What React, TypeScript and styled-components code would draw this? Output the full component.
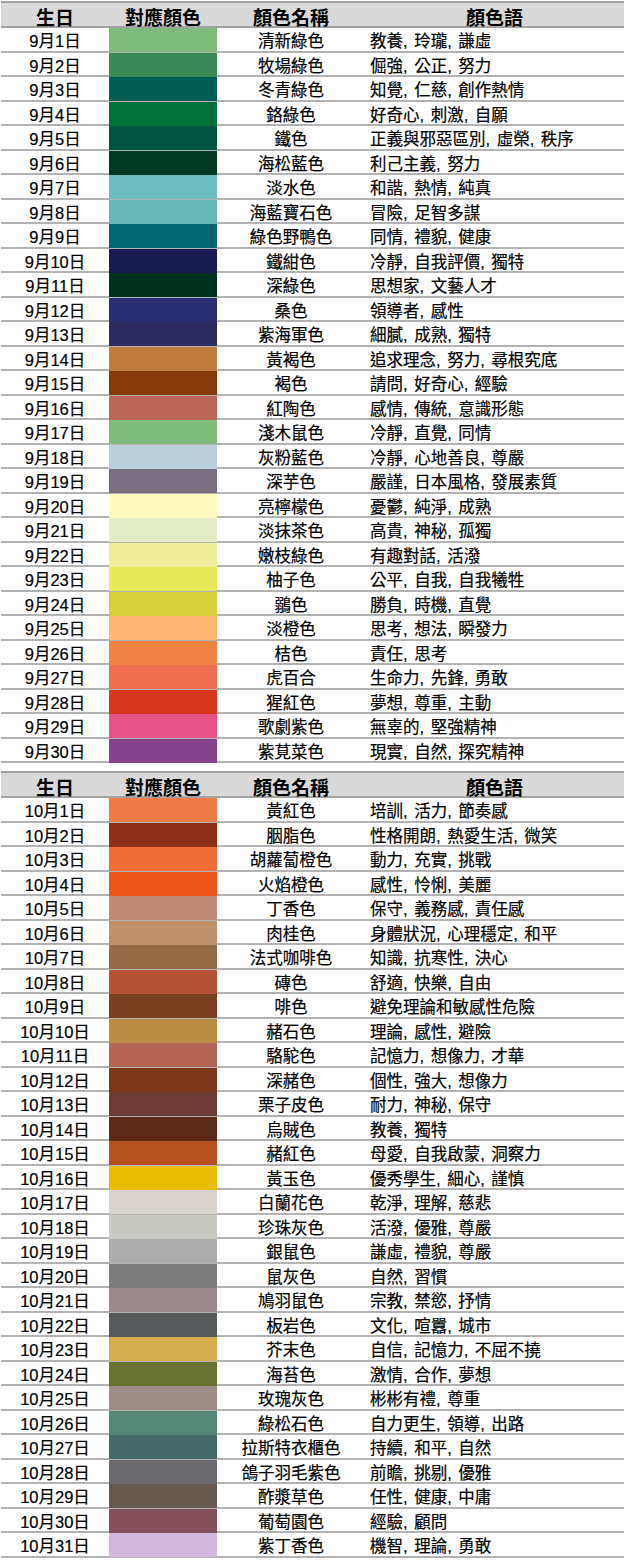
import styled, { createGlobalStyle } from "styled-components";

const GlobalStyle = createGlobalStyle`
  body {
    margin: 0;
    background: #fff;
    font-family: "Liberation Sans", "Noto Sans CJK TC", sans-serif;
    color: #000;
  }
`;

type Entry = [string, string, string, string];

const september: Entry[] = [
  ["9月1日", "#7fbb7c", "清新綠色", "教養, 玲瓏, 謙虛"],
  ["9月2日", "#3a8a58", "牧場綠色", "倔強, 公正, 努力"],
  ["9月3日", "#005f55", "冬青綠色", "知覺, 仁慈, 創作熱情"],
  ["9月4日", "#00713a", "鉻綠色", "好奇心, 刺激, 自願"],
  ["9月5日", "#005440", "鐵色", "正義與邪惡區別, 虛榮, 秩序"],
  ["9月6日", "#013a22", "海松藍色", "利己主義, 努力"],
  ["9月7日", "#6cbcc0", "淡水色", "和諧, 熱情, 純真"],
  ["9月8日", "#68b6b6", "海藍寶石色", "冒險, 足智多謀"],
  ["9月9日", "#006670", "綠色野鴨色", "同情, 禮貌, 健康"],
  ["9月10日", "#1a1a52", "鐵紺色", "冷靜, 自我評價, 獨特"],
  ["9月11日", "#00331f", "深綠色", "思想家, 文藝人才"],
  ["9月12日", "#2a2d72", "桑色", "領導者, 感性"],
  ["9月13日", "#2d2a60", "紫海軍色", "細膩, 成熟, 獨特"],
  ["9月14日", "#c07b40", "黃褐色", "追求理念, 努力, 尋根究底"],
  ["9月15日", "#873a0a", "褐色", "請問, 好奇心, 經驗"],
  ["9月16日", "#bb6656", "紅陶色", "感情, 傳統, 意識形態"],
  ["9月17日", "#7fbb7c", "淺木鼠色", "冷靜, 直覺, 同情"],
  ["9月18日", "#bccfdd", "灰粉藍色", "冷靜, 心地善良, 尊嚴"],
  ["9月19日", "#787080", "深芋色", "嚴謹, 日本風格, 發展素質"],
  ["9月20日", "#fffbbf", "亮檸檬色", "憂鬱, 純淨, 成熟"],
  ["9月21日", "#e3ebc7", "淡抹茶色", "高貴, 神秘, 孤獨"],
  ["9月22日", "#eeed9c", "嫩枝綠色", "有趣對話, 活潑"],
  ["9月23日", "#e9e85a", "柚子色", "公平, 自我, 自我犧牲"],
  ["9月24日", "#d8d03b", "鶸色", "勝負, 時機, 直覺"],
  ["9月25日", "#fdb66e", "淡橙色", "思考, 想法, 瞬發力"],
  ["9月26日", "#f08244", "桔色", "責任, 思考"],
  ["9月27日", "#ef6e50", "虎百合", "生命力, 先鋒, 勇敢"],
  ["9月28日", "#d5381d", "猩紅色", "夢想, 尊重, 主動"],
  ["9月29日", "#e65388", "歌劇紫色", "無辜的, 堅強精神"],
  ["9月30日", "#87428c", "紫莧菜色", "現實, 自然, 探究精神"],
];

const october: Entry[] = [
  ["10月1日", "#ee7b48", "黃紅色", "培訓, 活力, 節奏感"],
  ["10月2日", "#8e2e17", "胭脂色", "性格開朗, 熱愛生活, 微笑"],
  ["10月3日", "#ef6e38", "胡蘿蔔橙色", "動力, 充實, 挑戰"],
  ["10月4日", "#eb561b", "火焰橙色", "感性, 怜悧, 美麗"],
  ["10月5日", "#c48a78", "丁香色", "保守, 義務感, 責任感"],
  ["10月6日", "#c0906b", "肉桂色", "身體狀況, 心理穩定, 和平"],
  ["10月7日", "#936b47", "法式咖啡色", "知識, 抗寒性, 決心"],
  ["10月8日", "#b45236", "磚色", "舒適, 快樂, 自由"],
  ["10月9日", "#7a401f", "啡色", "避免理論和敏感性危險"],
  ["10月10日", "#bb8a43", "赭石色", "理論, 感性, 避險"],
  ["10月11日", "#b56553", "駱駝色", "記憶力, 想像力, 才華"],
  ["10月12日", "#7e3618", "深赭色", "個性, 強大, 想像力"],
  ["10月13日", "#6c3b33", "栗子皮色", "耐力, 神秘, 保守"],
  ["10月14日", "#5d2a18", "烏賊色", "教養, 獨特"],
  ["10月15日", "#b5521f", "赭紅色", "母愛, 自我啟蒙, 洞察力"],
  ["10月16日", "#ebbd00", "黃玉色", "優秀學生, 細心, 謹慎"],
  ["10月17日", "#d8d4cd", "白蘭花色", "乾淨, 理解, 慈悲"],
  ["10月18日", "#c8c8c3", "珍珠灰色", "活潑, 優雅, 尊嚴"],
  ["10月19日", "#adadad", "銀鼠色", "謙虛, 禮貌, 尊嚴"],
  ["10月20日", "#7d7d7d", "鼠灰色", "自然, 習慣"],
  ["10月21日", "#9b8a8d", "鳩羽鼠色", "宗教, 禁慾, 抒情"],
  ["10月22日", "#575a5a", "板岩色", "文化, 喧囂, 城市"],
  ["10月23日", "#d6ad4e", "芥末色", "自信, 記憶力, 不屈不撓"],
  ["10月24日", "#66722e", "海苔色", "激情, 合作, 夢想"],
  ["10月25日", "#9c8c85", "玫瑰灰色", "彬彬有禮, 尊重"],
  ["10月26日", "#558676", "綠松石色", "自力更生, 領導, 出路"],
  ["10月27日", "#456a68", "拉斯特衣櫃色", "持續, 和平, 自然"],
  ["10月28日", "#6a696e", "鴿子羽毛紫色", "前瞻, 挑剔, 優雅"],
  ["10月29日", "#655950", "酢漿草色", "任性, 健康, 中庸"],
  ["10月30日", "#84505b", "葡萄園色", "經驗, 顧問"],
  ["10月31日", "#d3b8db", "紫丁香色", "機智, 理論, 勇敢"],
];

const Page = styled.div`
  display: flex;
  flex-direction: column;
  gap: 8px;
  padding: 1px 2px 0 1px;
`;

const Table = styled.div`
  display: flex;
  flex-direction: column;
`;

const Grid = styled.div`
  display: grid;
  grid-template-columns: 108px 108px 148px 1fr;
  box-sizing: border-box;
`;

const HeaderRow = styled(Grid)`
  height: 27px;
  background: #d9d9d9;
  border-top: 2px solid #a3a3a3;
  border-bottom: 2px solid #a3a3a3;
  font-size: 19px;
  font-weight: 700;
`;

const HeadCell = styled.div`
  display: flex;
  align-items: center;
  justify-content: center;
`;

const Row = styled(Grid)`
  height: 24.5px;
  border-bottom: 2px solid #b3b3b3;
  font-size: 16.5px;
`;

const Cell = styled.div<{ $align?: "center" | "left" }>`
  display: flex;
  align-items: center;
  justify-content: ${(p) => (p.$align === "left" ? "flex-start" : "center")};
  padding-left: ${(p) => (p.$align === "left" ? "5px" : "0")};
  white-space: nowrap;
  word-spacing: 2px;
  -webkit-text-stroke: 0.2px #000;
`;

const Swatch = styled.div<{ $color: string }>`
  background: ${(p) => p.$color};
`;

const ColorTable = ({ rows }: { rows: Entry[] }) => (
  <Table>
    <HeaderRow>
      <HeadCell>生日</HeadCell>
      <HeadCell>對應顏色</HeadCell>
      <HeadCell>顏色名稱</HeadCell>
      <HeadCell>顏色語</HeadCell>
    </HeaderRow>
    {rows.map(([date, color, name, words]) => (
      <Row key={date}>
        <Cell>{date}</Cell>
        <Swatch $color={color} />
        <Cell>{name}</Cell>
        <Cell $align="left">{words}</Cell>
      </Row>
    ))}
  </Table>
);

export default function App() {
  return (
    <>
      <GlobalStyle />
      <Page>
        <ColorTable rows={september} />
        <ColorTable rows={october} />
      </Page>
    </>
  );
}
